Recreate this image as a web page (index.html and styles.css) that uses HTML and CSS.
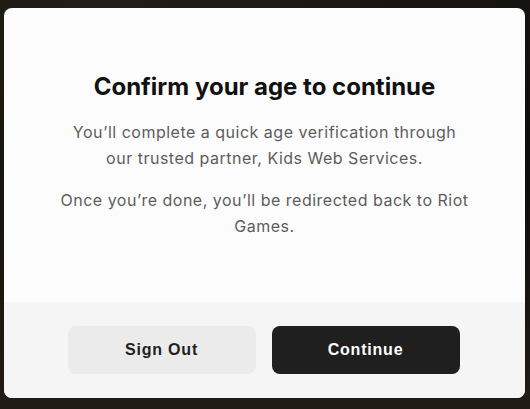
FILE: index.html
```html
<!DOCTYPE html>
<html>
<head>
<meta charset="utf-8">
<link rel="stylesheet" href="styles.css">
</head>
<body>
<div class="backdrop">
  <div class="modal">
    <div class="content">
      <h1 class="title">Confirm your age to continue</h1>
      <p class="text">You’ll complete a quick age verification through our trusted partner, Kids Web Services.</p>
      <p class="text">Once you’re done, you’ll be redirected back to Riot Games.</p>
    </div>
    <div class="footer">
      <button class="btn btn-secondary">Sign Out</button>
      <button class="btn btn-primary">Continue</button>
    </div>
  </div>
</div>
</body>
</html>
```
FILE: styles.css
```css
html, body {
  margin: 0;
  padding: 0;
  height: 100%;
}
body {
  background: radial-gradient(ellipse at 20% 0%, #2a241a 0%, #14120f 45%, #0c0c0c 70%),
              #111;
  font-family: Inter, "Noto Sans", sans-serif;
}
.backdrop {
  height: 100%;
  box-sizing: border-box;
  padding: 8px 5px 11px 4px;
  background: linear-gradient(180deg, rgba(30,26,20,0.6) 0%, rgba(12,12,12,0.2) 40%, rgba(48,38,28,0.6) 100%);
}
.modal {
  height: 100%;
  border-radius: 8px;
  overflow: hidden;
  background: #fcfcfc;
  display: flex;
  flex-direction: column;
}
.content {
  flex: 1;
  display: flex;
  flex-direction: column;
  align-items: center;
  padding: 63px 54px 0;
  text-align: center;
}
.title {
  margin: 0 0 16px;
  font-size: 24px;
  line-height: 32px;
  font-weight: 700;
  color: #111;
}
.text {
  max-width: 410px;
  margin: 0 0 16px;
  font-size: 16px;
  line-height: 26px;
  letter-spacing: 0.5px;
  color: #5c5c5c;
}
.footer {
  height: 96px;
  flex: none;
  background: #f5f5f5;
  display: flex;
  justify-content: center;
  align-items: flex-start;
  padding: 24px 2px 0 0;
  box-sizing: border-box;
  gap: 16px;
}
.btn {
  width: 188px;
  height: 48px;
  border: none;
  border-radius: 8px;
  font-family: "Liberation Sans", Arial, sans-serif;
  font-size: 16px;
  font-weight: 700;
  letter-spacing: 0.8px;
  cursor: pointer;
}
.btn-secondary {
  background: #ebebeb;
  color: #1f1f1f;
}
.btn-primary {
  background: #1f1f1f;
  color: #fff;
}
```
